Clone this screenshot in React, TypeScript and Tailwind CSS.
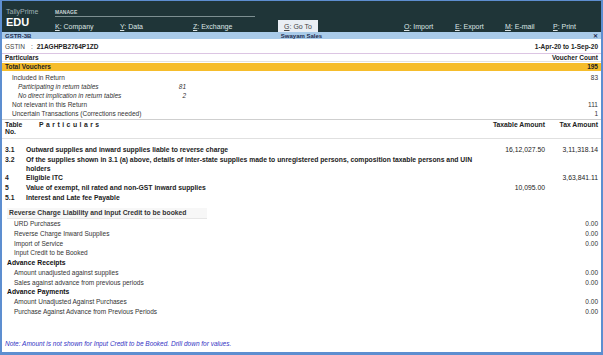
import React from 'react';

type Row = { label: string; indent?: number; bold?: boolean; italic?: boolean; mid?: string; right?: string };

const summaryRows: Row[] = [
  { label: 'Included in Return', indent: 10, right: '83' },
  { label: 'Participating in return tables', indent: 16, italic: true, mid: '81' },
  { label: 'No direct implication in return tables', indent: 16, italic: true, mid: '2' },
  { label: 'Not relevant in this Return', indent: 10, right: '111' },
  { label: 'Uncertain Transactions (Corrections needed)', indent: 10, right: '1' },
];

const bottomRows: Row[] = [
  { label: 'URD Purchases', indent: 12, right: '0.00' },
  { label: 'Reverse Charge Inward Supplies', indent: 12, right: '0.00' },
  { label: 'Import of Service', indent: 12, right: '0.00' },
  { label: 'Input Credit to be Booked', indent: 12 },
  { label: 'Advance Receipts', indent: 5, bold: true },
  { label: 'Amount unadjusted against supplies', indent: 12, right: '0.00' },
  { label: 'Sales against advance from previous periods', indent: 12, right: '0.00' },
  { label: 'Advance Payments', indent: 5, bold: true },
  { label: 'Amount Unadjusted Against Purchases', indent: 12, right: '0.00' },
  { label: 'Purchase Against Advance from Previous Periods', indent: 12, right: '0.00' },
];

const MenuItem = ({ hotkey, label, w }: { hotkey: string; label: string; w: string }) => (
  <div className={`${w} shrink-0 text-[7px] text-[#dde5e5]`}>
    <span className="underline">{hotkey}</span>: {label}
  </div>
);

export default function App() {
  return (
    <div className="w-[603px] h-[355px] flex flex-col bg-white border-x-2 border-b-[3px] border-t border-[#5d8ed0] font-['Liberation_Sans',Arial,sans-serif] text-[#222] overflow-hidden">
      {/* top bar */}
      <div className="h-[31px] bg-[#1f3538] flex shrink-0">
        <div className="w-[53px] pl-[4px] pt-[7px] flex flex-col leading-none">
          <span className="text-[7px] text-[#9fb2b4]">TallyPrime</span>
          <span className="text-[11px] font-bold text-white mt-[2px]">EDU</span>
        </div>
        <div className="flex-1 flex flex-col pt-[9px]">
          <div className="w-[200px] border-b border-[#7d8f91] pb-[1px] text-[5px] font-bold text-[#c9d3d4] leading-none">MANAGE</div>
          <div className="flex items-center mt-[3px] leading-none">
            <MenuItem hotkey="K" label="Company" w="w-[65px]" />
            <MenuItem hotkey="Y" label="Data" w="w-[73px]" />
            <MenuItem hotkey="Z" label="Exchange" w="w-[85px]" />
            <div className="w-[40px] h-[12px] bg-[#e9eef4] flex items-center justify-center text-[7px] text-[#444] shrink-0">
              <span className="underline">G</span>: Go To
            </div>
            <div className="w-[86px] shrink-0" />
            <MenuItem hotkey="O" label="Import" w="w-[51px]" />
            <MenuItem hotkey="E" label="Export" w="w-[50px]" />
            <MenuItem hotkey="M" label="E-mail" w="w-[48px]" />
            <MenuItem hotkey="P" label="Print" w="w-[40px]" />
          </div>
        </div>
      </div>

      {/* title bar */}
      <div className="h-[7px] bg-[#a9cbe9] flex items-center px-[3px] text-[6px] font-bold text-[#1c2b4f] leading-none shrink-0">
        <span className="w-[40px]">GSTR-3B</span>
        <span className="flex-1 text-center">Swayam Sales</span>
        <span className="w-[40px] text-right">✕</span>
      </div>

      {/* period */}
      <div className="h-[14px] mt-[1px] flex items-center justify-between px-[3px] text-[6.5px] border-b border-[#dcc5e3] shrink-0">
        <div>
          <span className="text-[#444]">GSTIN</span>
          <span className="ml-[6px] text-[#444]">:</span>
          <span className="ml-[4px] font-bold">21AGHPB2764P1ZD</span>
        </div>
        <span className="font-bold">1-Apr-20 to 1-Sep-20</span>
      </div>

      <div className="h-[8px] flex items-center justify-between px-[3px] text-[6.5px] font-bold border-b border-[#e2e2e2] shrink-0">
        <span>Particulars</span>
        <span>Voucher Count</span>
      </div>

      <div className="h-[8px] mt-[1px] bg-[#f6bd2b] flex items-center justify-between px-[3px] text-[6.5px] font-bold shrink-0">
        <span>Total Vouchers</span>
        <span>195</span>
      </div>

      <div className="flex flex-col pt-[2px] pb-[1px] border-b border-[#cfcfcf] shrink-0">
        {summaryRows.map((r) => (
          <div key={r.label} className="h-[9px] flex items-center text-[6.5px] text-[#333] pr-[3px]">
            <span className={`w-[176px] ${r.italic ? 'italic' : ''}`} style={{ paddingLeft: r.indent }}>
              {r.label}
            </span>
            <span className="w-[8px] text-right italic">{r.mid}</span>
            <span className="flex-1 text-right">{r.right}</span>
          </div>
        ))}
      </div>

      {/* table header */}
      <div className="h-[19px] flex items-start pt-[1px] px-[3px] text-[6.8px] font-bold border-b border-[#e0e0e0] leading-[7px] shrink-0">
        <div className="w-[34px]">
          Table
          <br />
          No.
        </div>
        <div className="flex-1 tracking-[2.5px]">Particulars</div>
        <div className="w-[62px] text-right">Taxable Amount</div>
        <div className="w-[53px] text-right">Tax Amount</div>
      </div>

      <div className="flex flex-col pt-[6px] text-[6.8px] font-bold shrink-0">
        <div className="h-[10px] flex items-center px-[3px]">
          <span className="w-[21px]">3.1</span>
          <span className="flex-1">Outward supplies and inward supplies liable to reverse charge</span>
          <span className="w-[62px] text-right font-normal">16,12,027.50</span>
          <span className="w-[53px] text-right font-normal">3,11,318.14</span>
        </div>
        <div className="flex px-[3px] leading-[9px]">
          <span className="w-[21px] shrink-0">3.2</span>
          <span className="w-[452px]">
            Of the supplies shown in 3.1 (a) above, details of inter-state supplies made to unregistered persons, composition taxable persons and UIN holders
          </span>
        </div>
        <div className="h-[10px] flex items-center px-[3px]">
          <span className="w-[21px]">4</span>
          <span className="flex-1">Eligible ITC</span>
          <span className="w-[53px] text-right font-normal">3,63,841.11</span>
        </div>
        <div className="h-[10px] flex items-center px-[3px]">
          <span className="w-[21px]">5</span>
          <span className="flex-1">Value of exempt, nil rated and non-GST inward supplies</span>
          <span className="w-[62px] text-right font-normal">10,095.00</span>
          <span className="w-[53px]" />
        </div>
        <div className="h-[10px] flex items-center px-[3px]">
          <span className="w-[21px]">5.1</span>
          <span className="flex-1">Interest and Late fee Payable</span>
        </div>
      </div>

      <div className="mt-[5px] ml-[5px] w-[200px] h-[11px] flex items-center pl-[2px] bg-[#f7f7f7] border-b border-[#e6e6e6] text-[6.8px] font-bold text-[#333] shrink-0">
        Reverse Charge Liability and Input Credit to be booked
      </div>

      <div className="flex flex-col shrink-0">
        {bottomRows.map((r) => (
          <div key={r.label} className="h-[9.8px] flex items-center justify-between pr-[3px] text-[6.5px]">
            <span className={r.bold ? 'font-bold text-[#111] text-[6.8px]' : 'text-[#333]'} style={{ paddingLeft: r.indent }}>
              {r.label}
            </span>
            <span className="text-[#333]">{r.right}</span>
          </div>
        ))}
      </div>

      <div className="flex-1" />
      <div className="h-[10px] px-[3px] flex items-center text-[6.5px] italic text-[#3434c4] shrink-0">
        Note: Amount is not shown for Input Credit to be Booked. Drill down for values.
      </div>
      <div className="h-[3px] shrink-0" />
    </div>
  );
}
